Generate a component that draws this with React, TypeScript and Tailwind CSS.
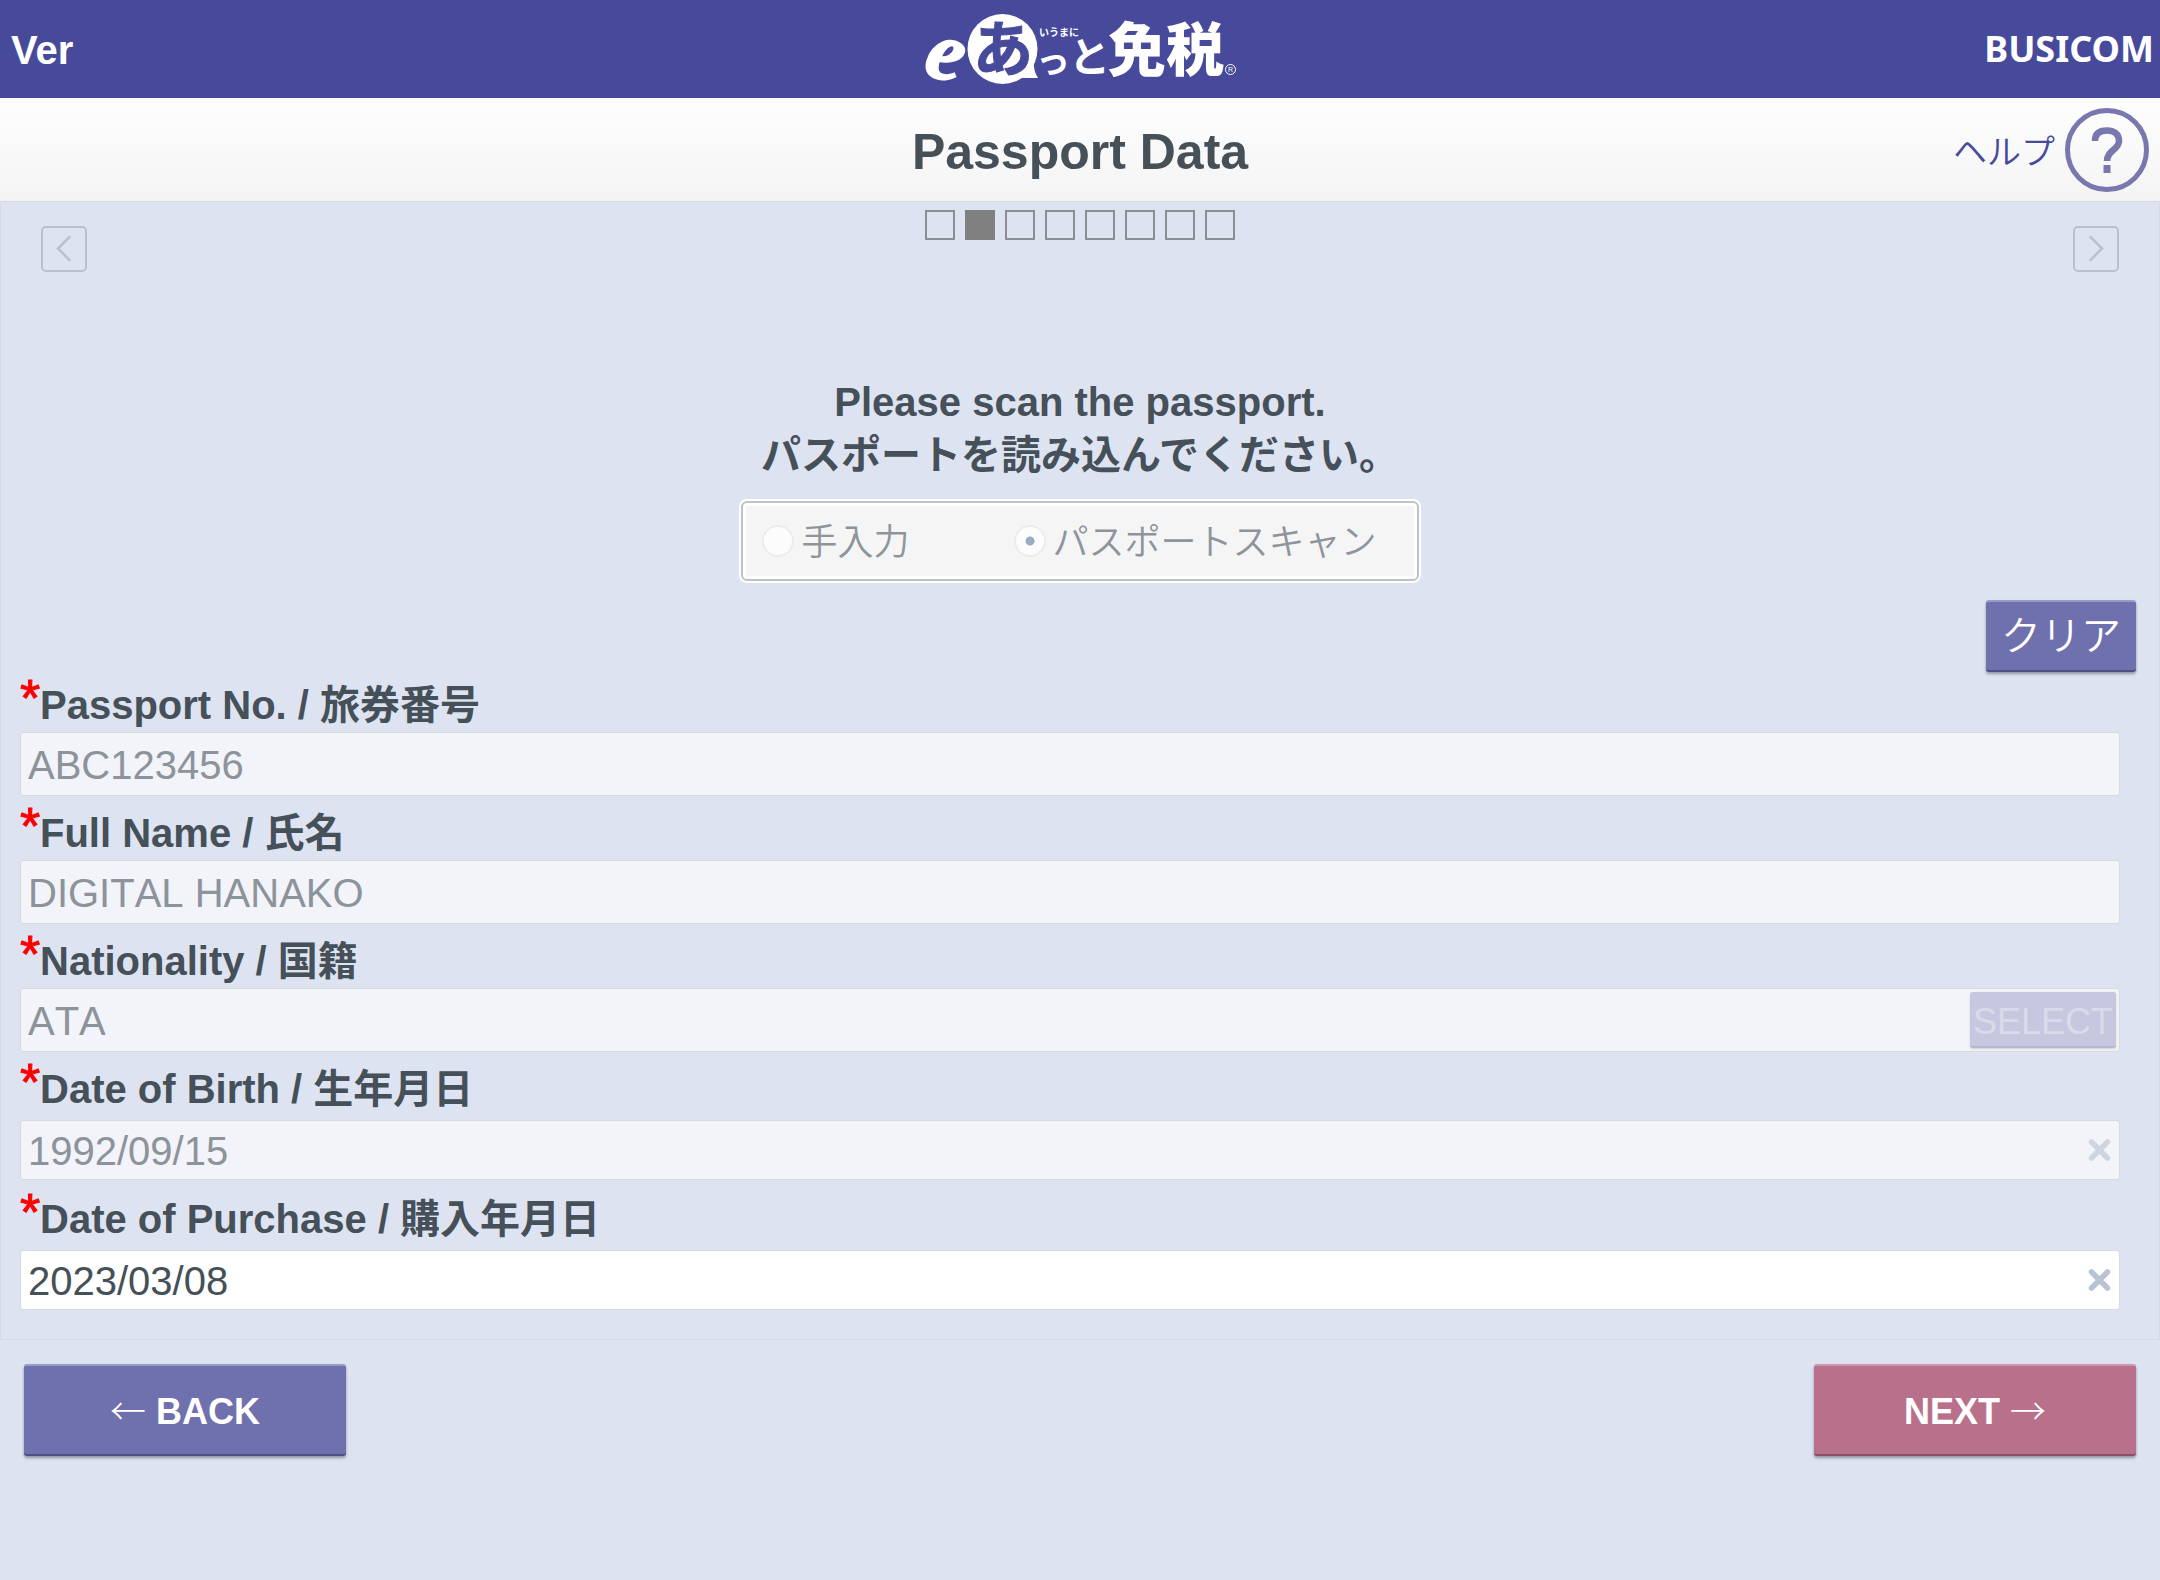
import { useState, type ReactNode } from "react";

const STEPS = 8;
const CURRENT_STEP = 1;

function Logo() {
  return (
    <svg
      role="img"
      aria-label="eあっと免税"
      className="h-[98px] w-[334px] overflow-visible fill-white font-['Noto_Sans_CJK_JP',sans-serif]"
      viewBox="913 0 334 98"
    >
      <text
        x="926"
        y="79"
        fontSize="84"
        fontWeight="700"
        fontStyle="italic"
        fontFamily="Liberation Serif, serif"
        stroke="#fff"
        strokeWidth="2"
        transform="rotate(14 944 60)"
      >
        e
      </text>
      <circle cx="1002.5" cy="49" r="35" />
      <path d="M1034 62 Q1033 70 1038 78 L1022 78 Z" />
      <text x="973" y="71" fontSize="60" fontWeight="700" fill="#474a9b" stroke="#474a9b" strokeWidth="1">
        あ
      </text>
      <text x="1039" y="36" fontSize="10" fontWeight="700">
        いうまに
      </text>
      <text x="1036" y="73" fontSize="34" fontWeight="700">
        っ
      </text>
      <text x="1069" y="72" fontSize="41" fontWeight="700">
        と
      </text>
      <text x="1108" y="71" fontSize="58" fontWeight="900">
        免税
      </text>
      <circle cx="1230.5" cy="69.5" r="5" fill="none" stroke="#fff" strokeWidth="1" />
      <text x="1228" y="72" fontSize="7" fontFamily="Liberation Sans, sans-serif">
        R
      </text>
    </svg>
  );
}

function PagerButton({ label, d }: { label: string; d: string }) {
  return (
    <button
      type="button"
      disabled
      aria-label={label}
      className="mt-6 flex size-[46px] items-center justify-center rounded-[5px] border-2 border-[#bcc0c9]"
    >
      <svg viewBox="0 0 42 42" className="size-[42px]" fill="none" stroke="#bcc0c9" strokeWidth="2.5" strokeLinecap="round">
        <path d={d} />
      </svg>
    </button>
  );
}

function ScanOption({ label, checked, onSelect }: { label: string; checked: boolean; onSelect: () => void }) {
  return (
    <label className="flex items-center gap-[7px]">
      <input
        type="radio"
        name="entry"
        checked={checked}
        onChange={onSelect}
        className="size-8 appearance-none rounded-full border-2 border-[#ececec] bg-[#fcfcfc] checked:bg-[radial-gradient(circle,#9aacc0_0,#9aacc0_4px,#fcfcfc_5px)]"
      />
      <span className="pt-[3px] font-[350]">{label}</span>
    </label>
  );
}

type FieldProps = {
  id: string;
  label: string;
  value: string;
  date?: boolean;
  enabled?: boolean;
  children?: ReactNode;
};

function Field({ id, label, value, date = false, enabled = false, children }: FieldProps) {
  return (
    <div className="flex flex-col">
      <label htmlFor={id} className="flex h-15 items-start leading-[66px] font-bold">
        <span className="w-5 text-[52px] leading-[53px] font-normal text-[#ff0000] [-webkit-text-stroke:1px_#ff0000]">*</span>
        {label}
      </label>
      <div
        className={`flex items-center rounded-[3px] border border-[#d8dae0] ${date ? "mt-1 mb-0.5 h-15" : "h-16"} ${
          enabled ? "bg-white" : "bg-[#f2f4f9]"
        }`}
      >
        <input
          id={id}
          type="text"
          defaultValue={value}
          disabled={!enabled}
          className={`h-full min-w-0 flex-1 bg-transparent px-[7px] pt-0.5 [font-kerning:none] ${
            enabled ? "text-[#455059]" : "text-[#8c939a]"
          }`}
        />
        {children}
      </div>
    </div>
  );
}

function ClearIcon({ dim = false }: { dim?: boolean }) {
  return (
    <button type="button" disabled={dim} aria-label="Clear date" className="mr-2 flex size-[23px] items-center justify-center">
      <svg viewBox="0 0 23 23" className="size-[23px]" stroke={dim ? "#ced5e1" : "#b9c4d1"} strokeWidth="5.5" strokeLinecap="round">
        <path d="M3.5 3 L19.5 19 M19.5 3 L3.5 19" />
      </svg>
    </button>
  );
}

export default function App() {
  const [mode, setMode] = useState("scan");

  return (
    <div className="min-h-screen bg-[#dde3f1] font-['Liberation_Sans','Noto_Sans_CJK_JP',sans-serif] text-[40px] text-[#455059]">
      <header className="grid h-[98px] grid-cols-[1fr_auto_1fr] items-center bg-[#474a9b] text-white">
        <span className="pt-0.5 pl-[11px] font-bold">Ver</span>
        <Logo />
        <span className="pr-[6px] text-right font-['Noto_Sans',sans-serif] text-[36px] font-bold">BUSICOM</span>
      </header>

      <div className="grid h-[103px] grid-cols-[1fr_auto_1fr] items-center bg-linear-to-b from-[#fefefe] to-[#f4f4f4]">
        <span />
        <h1 className="pt-1.5 text-[50px] font-bold">Passport Data</h1>
        <a
          href="#help"
          className="flex items-center justify-end gap-2.5 pr-[11px] font-['Noto_Sans_CJK_JP',sans-serif] text-[34px] leading-[80px] font-[350] text-[#474a9b]"
        >
          ヘルプ
          <svg viewBox="0 0 84 84" className="size-[84px]" fill="none" stroke="#7877ae">
            <circle cx="42" cy="42" r="39.5" strokeWidth="5" />
            <path d="M30 33 C30 25 35 22.5 42 22.5 C49 22.5 54 26 54 33 C54 42 42 42 42 53" strokeWidth="6.5" />
            <path d="M42 57 V65" strokeWidth="7" />
          </svg>
        </a>
      </div>

      <main className="border border-[#d8dae0] pb-[27px]">
        <div className="flex items-start justify-between px-10">
          <PagerButton label="Previous page" d="M26.5 9 L15 20.5 L26.5 32" />
          <ol className="flex gap-2.5 pt-2">
            {Array.from({ length: STEPS }, (_, i) => (
              <li
                key={i}
                className={`size-[30px] border-2 ${
                  i === CURRENT_STEP ? "border-[#808080] bg-[#808080]" : "border-[#8b8d92]"
                }`}
              />
            ))}
          </ol>
          <PagerButton label="Next page" d="M15.5 9 L27 20.5 L15.5 32" />
        </div>

        <div className="mt-[104px] text-center leading-[52px] font-bold">
          <p>Please scan the passport.</p>
          <p className="pt-px">パスポートを読み込んでください。</p>
        </div>

        <fieldset className="mx-auto mt-[18px] w-fit rounded-lg bg-white p-0.5">
          <div className="rounded-md border-2 border-[#bfc1c6] p-[3px]">
            <div className="flex h-[70px] items-center gap-[104px] bg-[#f5f5f5] pr-[37px] pl-4 text-[36px] text-[#8e949b]">
              <ScanOption label="手入力" checked={mode === "manual"} onSelect={() => setMode("manual")} />
              <ScanOption label="パスポートスキャン" checked={mode === "scan"} onSelect={() => setMode("scan")} />
            </div>
          </div>
        </fieldset>

        <div className="mt-[17px] flex justify-end pr-[23px]">
          <button
            type="button"
            className="h-[72px] w-[150px] rounded-[3px] border-t-2 border-b-2 border-t-[#9b9bc9] border-b-[#4f4f86] bg-[#6f70ae] font-[350] text-white shadow-[0_2px_3px_rgba(0,0,0,0.35)]"
          >
            クリア
          </button>
        </div>

        <div className="flex flex-col gap-1 pr-[39px] pl-[19px]">
          <Field id="passport" label="Passport No. / 旅券番号" value="ABC123456" />
          <Field id="name" label="Full Name / 氏名" value="DIGITAL HANAKO" />
          <Field id="nationality" label="Nationality / 国籍" value="ATA">
            <button
              type="button"
              disabled
              className="mr-[3px] h-14 w-[146px] rounded-[3px] border-b-2 border-[#b5b7cf] bg-[#c6c8e0] pt-1.5 text-[36px] leading-[48px] text-[#d9dbea] shadow-[0_1px_2px_rgba(0,0,0,0.15)]"
            >
              SELECT
            </button>
          </Field>
          <Field id="birth" label="Date of Birth / 生年月日" value="1992/09/15" date>
            <ClearIcon dim />
          </Field>
          <Field id="purchase" label="Date of Purchase / 購入年月日" value="2023/03/08" date enabled>
            <ClearIcon />
          </Field>
        </div>
      </main>

      <footer className="flex justify-between px-6 pt-6 text-[36px] font-bold text-white">
        <button
          type="button"
          className="flex h-[92px] w-[322px] items-center justify-center gap-2.5 rounded-[3px] border-t-2 border-b-2 border-t-[#9b9bc9] border-b-[#4f4f86] bg-[#6f70ae] pt-[3px] shadow-[0_2px_3px_rgba(0,0,0,0.35)]"
        >
          <span className="pb-1.5 font-['Noto_Sans_CJK_JP',sans-serif] leading-9 font-light">←</span>
          BACK
        </button>
        <button
          type="button"
          className="flex h-[92px] w-[322px] items-center justify-center gap-2.5 rounded-[3px] border-t-2 border-b-2 border-t-[#d197ab] border-b-[#8a4f66] bg-[#b8708b] pt-[3px] shadow-[0_2px_3px_rgba(0,0,0,0.35)]"
        >
          NEXT
          <span className="pb-1.5 font-['Noto_Sans_CJK_JP',sans-serif] leading-9 font-light">→</span>
        </button>
      </footer>
    </div>
  );
}
